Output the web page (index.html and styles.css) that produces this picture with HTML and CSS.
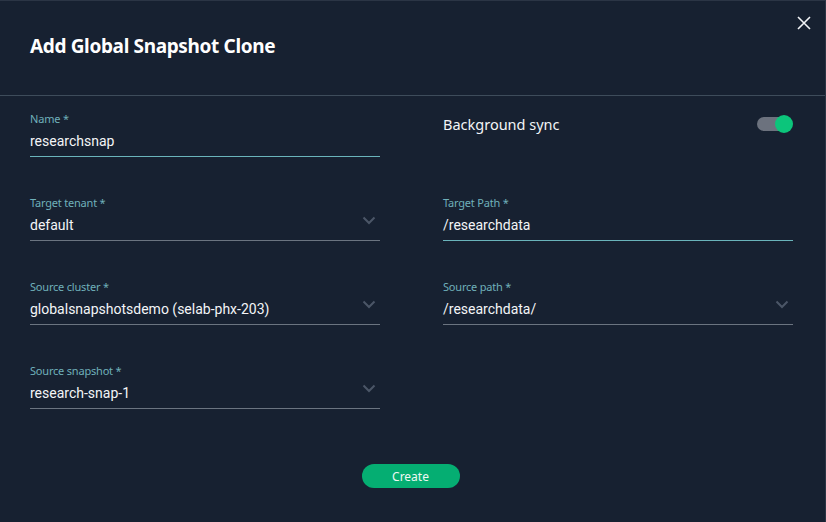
FILE: index.html
```html
<!DOCTYPE html>
<html>
<head>
<meta charset="utf-8">
<link rel="stylesheet" href="styles.css">
</head>
<body>
<div class="modal">
  <div class="header">
    <h1 class="title">Add Global Snapshot Clone</h1>
    <button class="close" aria-label="Close">
      <svg width="14" height="14" viewBox="0 0 14 14"><path d="M1 1L13 13M13 1L1 13" stroke="#f2f4f7" stroke-width="1.6" fill="none"/></svg>
    </button>
  </div>
  <div class="form">
    <div class="field">
      <div class="label">Name *</div>
      <div class="input active"><span class="value">researchsnap</span></div>
    </div>
    <div class="field">
      <div class="switch-row">
        <span class="switch-label">Background sync</span>
        <span class="toggle"><span class="track"></span><span class="knob"></span></span>
      </div>
    </div>
    <div class="field">
      <div class="label">Target tenant *</div>
      <div class="input select"><span class="value">default</span><svg class="chev" width="14" height="9" viewBox="0 0 14 9"><path d="M1.5 1.5L7 7L12.5 1.5" stroke="#4b5667" stroke-width="2" fill="none"/></svg></div>
    </div>
    <div class="field">
      <div class="label">Target Path *</div>
      <div class="input active"><span class="value">/researchdata</span></div>
    </div>
    <div class="field">
      <div class="label">Source cluster *</div>
      <div class="input select"><span class="value">globalsnapshotsdemo (selab-phx-203)</span><svg class="chev" width="14" height="9" viewBox="0 0 14 9"><path d="M1.5 1.5L7 7L12.5 1.5" stroke="#4b5667" stroke-width="2" fill="none"/></svg></div>
    </div>
    <div class="field">
      <div class="label">Source path *</div>
      <div class="input select"><span class="value">/researchdata/</span><svg class="chev" width="14" height="9" viewBox="0 0 14 9"><path d="M1.5 1.5L7 7L12.5 1.5" stroke="#4b5667" stroke-width="2" fill="none"/></svg></div>
    </div>
    <div class="field">
      <div class="label">Source snapshot *</div>
      <div class="input select"><span class="value">research-snap-1</span><svg class="chev" width="14" height="9" viewBox="0 0 14 9"><path d="M1.5 1.5L7 7L12.5 1.5" stroke="#4b5667" stroke-width="2" fill="none"/></svg></div>
    </div>
  </div>
  <div class="footer">
    <button class="create">Create</button>
  </div>
</div>
</body>
</html>
```

FILE: styles.css
```css
* { box-sizing: border-box; }
html, body { margin: 0; padding: 0; background: #172131; }
.modal {
  width: 826px;
  height: 522px;
  background: #172131;
  border-top: 1px solid #2b3545;
  border-right: 1px solid #2b3545;
  display: flex;
  flex-direction: column;
}
.header {
  height: 95px;
  border-bottom: 1px solid #3e4c5b;
  display: flex;
  justify-content: space-between;
  align-items: flex-start;
  padding: 0 14px 0 30px;
}
.title {
  margin: 33px 0 0 0;
  font-family: "Noto Sans", sans-serif;
  font-weight: 700;
  font-size: 19px;
  line-height: 24px;
  color: #ffffff;
  letter-spacing: -0.35px;
}
.close {
  margin-top: 15px;
  background: none;
  border: 0;
  padding: 0;
  width: 14px;
  height: 14px;
  display: flex;
  cursor: pointer;
}
.form {
  display: grid;
  grid-template-columns: 350px 350px;
  column-gap: 63px;
  row-gap: 39px;
  padding: 16px 0 0 30px;
}
.field { height: 45px; }
.label {
  font-family: "Noto Sans", sans-serif;
  font-size: 11px;
  line-height: 14px;
  color: #6fb0ba;
  letter-spacing: -0.2px;
}
.input {
  height: 31px;
  border-bottom: 1px solid #6b7480;
  display: flex;
  align-items: center;
  justify-content: space-between;
  padding-right: 4px;
}
.input.active { border-bottom-color: #6ab4bb; }
.value {
  font-family: Roboto, sans-serif;
  font-size: 14px;
  color: #f3f5f7;
}
.chev { margin-top: -10px; }
.switch-row {
  height: 24px;
  display: flex;
  align-items: center;
  justify-content: space-between;
}
.switch-label {
  font-family: "Noto Sans", sans-serif;
  font-size: 14.5px;
  color: #f3f5f7;
}
.toggle {
  position: relative;
  width: 36px;
  height: 18px;
  display: block;
}
.track {
  position: absolute;
  left: 0;
  top: 2px;
  width: 30px;
  height: 14px;
  border-radius: 7px;
  background: #6c727e;
}
.knob {
  position: absolute;
  right: 0;
  top: 0;
  width: 18px;
  height: 18px;
  border-radius: 50%;
  background: #0cc57b;
}
.footer {
  display: flex;
  justify-content: center;
  padding: 55px 4px 0 0;
}
.create {
  width: 98px;
  height: 24px;
  border: 0;
  border-radius: 12px;
  background: #05ae72;
  color: #eef8f3;
  font-family: "Noto Sans", sans-serif;
  font-size: 12px;
  padding: 0;
  cursor: pointer;
}
```
